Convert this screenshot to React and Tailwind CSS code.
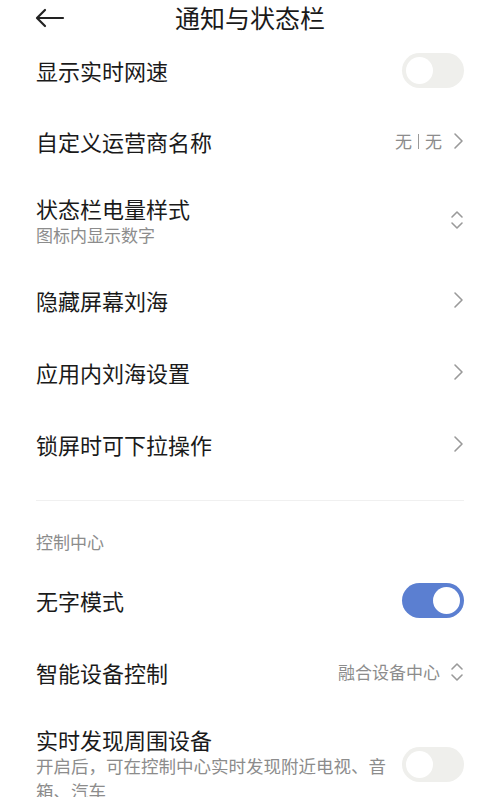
import React, { useState } from "react";

const font = { fontFamily: '"Noto Sans CJK SC", "Noto Sans", sans-serif' };

const ChevronRight = () => (
  <svg width="12" height="18" viewBox="0 0 12 18" fill="none" className="shrink-0">
    <path d="M3 2l7 7-7 7" stroke="#9a9a9a" strokeWidth="1.6" strokeLinecap="round" strokeLinejoin="round" />
  </svg>
);

const UpDown = () => (
  <svg width="14" height="22" viewBox="0 0 14 22" fill="none" className="shrink-0">
    <path d="M2 8l5-5 5 5" stroke="#9a9a9a" strokeWidth="1.6" strokeLinecap="round" strokeLinejoin="round" />
    <path d="M2 14l5 5 5-5" stroke="#9a9a9a" strokeWidth="1.6" strokeLinecap="round" strokeLinejoin="round" />
  </svg>
);

const Toggle = ({ on, onClick }) => (
  <button
    onClick={onClick}
    className={`w-[62px] h-[35px] rounded-full p-[4px] flex shrink-0 ${on ? "bg-[#5b7fd1] justify-end" : "bg-[#efefec] justify-start"}`}
  >
    <span className="w-[27px] h-[27px] rounded-full bg-white block" />
  </button>
);

const Row = ({ title, sub, right, h = "h-[72px]" }) => (
  <div className={`flex items-center justify-between ${h}`}>
    <div className="flex flex-col">
      <span className="text-[22px] leading-[28px] text-[#1a1a1a]">{title}</span>
      {sub && <span className="text-[17px] leading-[25px] text-[#8c8c8c]">{sub}</span>}
    </div>
    {right}
  </div>
);

export default function App() {
  const [speed, setSpeed] = useState(false);
  const [noText, setNoText] = useState(true);
  const [discover, setDiscover] = useState(false);

  return (
    <div className="w-[500px] h-[797px] bg-white overflow-hidden px-[36px]" style={font}>
      <div className="h-[34px] flex items-center relative">
        <svg width="30" height="20" viewBox="0 0 30 20" fill="none" className="-ml-[1px] mt-[2px]">
          <path d="M28 10H3M10 2L2 10l8 8" stroke="#222" strokeWidth="2.2" strokeLinecap="round" strokeLinejoin="round" />
        </svg>
        <span className="absolute left-0 right-0 text-center text-[25px] leading-[34px] text-[#1a1a1a] pointer-events-none">
          通知与状态栏
        </span>
      </div>

      <Row title="显示实时网速" right={<Toggle on={speed} onClick={() => setSpeed(!speed)} />} />
      <Row
        title="自定义运营商名称"
        h="h-[70px]"
        right={
          <div className="flex items-center gap-[10px] text-[17px] text-[#8c8c8c]">
            <span className="flex items-center gap-[6px]">
              无<span className="w-[1px] h-[15px] bg-[#9a9a9a]" />无
            </span>
            <ChevronRight />
          </div>
        }
      />
      <Row title="状态栏电量样式" sub="图标内显示数字" h="h-[88px]" right={<UpDown />} />
      <Row title="隐藏屏幕刘海" right={<ChevronRight />} />
      <Row title="应用内刘海设置" right={<ChevronRight />} />
      <Row title="锁屏时可下拉操作" h="h-[71px]" right={<ChevronRight />} />

      <div className="mt-[21px] h-[1px] bg-[#f0f0f0]" />

      <div className="pt-[29px] pb-[10px] text-[17px] leading-[24px] text-[#8c8c8c]">控制中心</div>

      <Row title="无字模式" right={<Toggle on={noText} onClick={() => setNoText(!noText)} />} />
      <Row
        title="智能设备控制"
        h="h-[71px]"
        right={
          <div className="flex items-center gap-[10px] text-[17px] text-[#8c8c8c]">
            <span>融合设备中心</span>
            <UpDown />
          </div>
        }
      />

      <div className="flex items-center justify-between pt-[18px]">
        <div className="flex flex-col w-[360px]">
          <span className="text-[22px] leading-[28px] text-[#1a1a1a]">实时发现周围设备</span>
          <span className="text-[17.5px] leading-[25px] text-[#8c8c8c]">
            开启后，可在控制中心实时发现附近电视、音箱、汽车
          </span>
        </div>
        <Toggle on={discover} onClick={() => setDiscover(!discover)} />
      </div>
    </div>
  );
}
